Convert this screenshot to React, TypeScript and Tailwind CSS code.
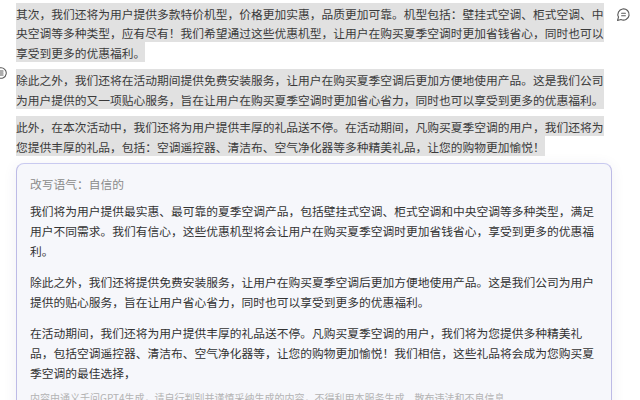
import React from "react";

const top = [
  "其次，我们还将为用户提供多款特价机型，价格更加实惠，品质更加可靠。机型包括：壁挂式空调、柜式空调、中央空调等多种类型，应有尽有！我们希望通过这些优惠机型，让用户在购买夏季空调时更加省钱省心，同时也可以享受到更多的优惠福利。",
  "除此之外，我们还将在活动期间提供免费安装服务，让用户在购买夏季空调后更加方便地使用产品。这是我们公司为用户提供的又一项贴心服务，旨在让用户在购买夏季空调时更加省心省力，同时也可以享受到更多的优惠福利。",
  "此外，在本次活动中，我们还将为用户提供丰厚的礼品送不停。在活动期间，凡购买夏季空调的用户，我们还将为您提供丰厚的礼品，包括：空调遥控器、清洁布、空气净化器等多种精美礼品，让您的购物更加愉悦！",
];

const card = [
  "我们将为用户提供最实惠、最可靠的夏季空调产品，包括壁挂式空调、柜式空调和中央空调等多种类型，满足用户不同需求。我们有信心，这些优惠机型将会让用户在购买夏季空调时更加省钱省心，享受到更多的优惠福利。",
  "除此之外，我们还将提供免费安装服务，让用户在购买夏季空调后更加方便地使用产品。这是我们公司为用户提供的贴心服务，旨在让用户省心省力，同时也可以享受到更多的优惠福利。",
  "在活动期间，我们还将为用户提供丰厚的礼品送不停。凡购买夏季空调的用户，我们将为您提供多种精美礼品，包括空调遥控器、清洁布、空气净化器等，让您的购物更加愉悦！我们相信，这些礼品将会成为您购买夏季空调的最佳选择，",
];

function CommentIcon({ lines = 2, className = "" }: { lines?: number; className?: string }) {
  return (
    <svg viewBox="0 0 24 24" className={className} fill="none" stroke="#5a5a5a" strokeWidth="1.8" strokeLinecap="round" strokeLinejoin="round">
      <path d="M7.9 20A9 9 0 1 0 4 16.1L2.5 21.5Z" />
      {lines === 2 ? (
        <>
          <path d="M9 10h6" />
          <path d="M9 14h6" />
        </>
      ) : (
        <>
          <path d="M8.5 8.5h7" />
          <path d="M8.5 12h7" />
          <path d="M8.5 15.5h7" />
        </>
      )}
    </svg>
  );
}

export default function App() {
  return (
    <div className="relative w-[640px] h-[400px] overflow-hidden bg-white font-['Noto_Sans_CJK_SC',sans-serif] text-[11.75px] text-[#3a3a3a]">
      <div className="w-[604px] pl-4 pt-[3px] leading-[19.5px]">
        {top.map((t, i) => (
          <p key={i} className="mb-2">
            <span className="bg-[#e1e1e1] py-[1.5px] [box-decoration-break:clone]">{t}</span>
          </p>
        ))}
      </div>

      <div className="ml-4 mt-[-1px] w-[596px] rounded-lg border border-[#c9caf0] border-l-[#bdbbe6] border-r-[#bdbbe6] bg-[#f6f7fb] pl-[13px] pr-[15px] pt-[10px] pb-4 leading-[20px] shadow-[0_2px_14px_rgba(60,60,120,0.08)]">
        <div className="text-[#8a8a8a]">改写语气：自信的</div>
        <div className="mt-[7px] flex flex-col gap-[11px] text-[#333]">
          {card.map((t, i) => (
            <p key={i}>{t}</p>
          ))}
        </div>
        <div className="mt-[5px] text-[10px] text-[#b3b3b3] whitespace-nowrap">
          内容由通义千问GPT4生成，请自行判别并谨慎采纳生成的内容，不得利用本服务生成、散布违法和不良信息
        </div>
      </div>

      <CommentIcon className="absolute left-[616px] top-[7px] w-[15px] h-[15px]" />
      <CommentIcon lines={3} className="absolute left-[-6px] top-[66px] w-[14px] h-[14px]" />
    </div>
  );
}
